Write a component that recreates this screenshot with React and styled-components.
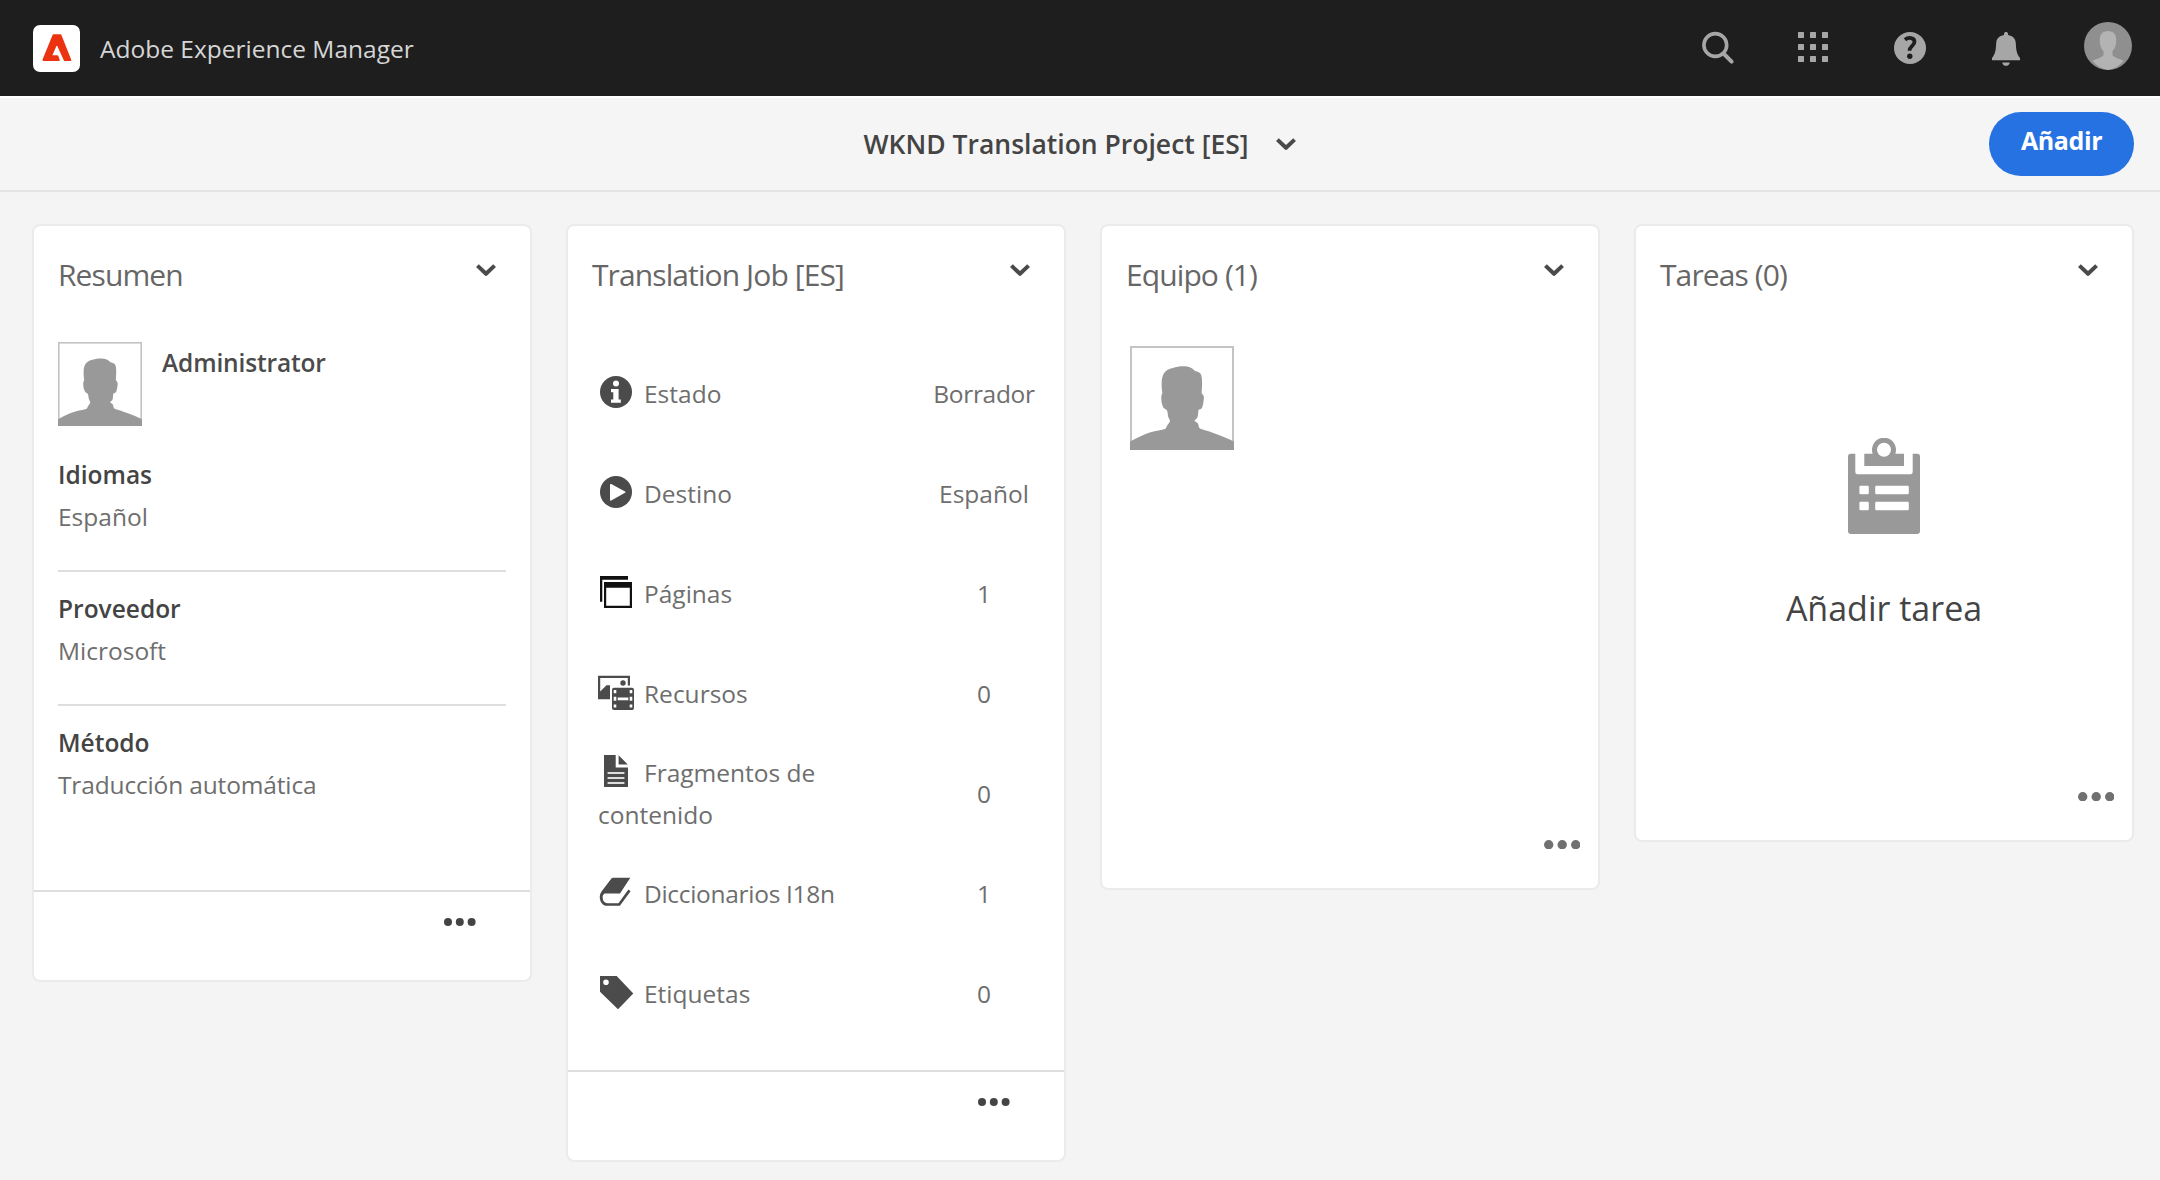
import React from "react";
import styled, { createGlobalStyle, css } from "styled-components";

const GlobalStyle = createGlobalStyle`
  *, *::before, *::after { box-sizing: border-box; }
  body { margin: 0; background: #f4f4f4; }
`;

const Page = styled.div`
  min-height: 1180px;
  background: #f4f4f4;
  color: #6e6e6e;
  font-family: "Open Sans", "Noto Sans", sans-serif;
  font-size: 24.5px;
`;

const tracked = css`
  letter-spacing: ${(p) => p.$track || 0}px;
`;

/* Shell header */
const Shell = styled.header`
  display: flex;
  align-items: center;
  height: 96px;
  padding: 0 28px 0 33px;
  background: #1e1e1e;
`;
const Logo = styled.svg`
  display: block;
  width: 47px;
  height: 47px;
`;
const Product = styled.span`
  margin-left: 20px;
  color: #d6d6d6;
  white-space: nowrap;
`;
const ShellActions = styled.nav`
  display: flex;
  align-items: center;
  margin-left: auto;
`;
const ShellButton = styled.button`
  display: grid;
  place-items: center;
  width: 96px;
  height: 96px;
  padding: 0;
  border: 0;
  background: none;
  color: #a6a6a6;
`;
const Icon = styled.svg`
  display: block;
  width: 36px;
  height: 36px;
`;
const UserPhoto = styled.svg`
  display: block;
  width: 48px;
  height: 48px;
  margin: 0 0 4px 30px;
`;

/* Title bar */
const TitleBar = styled.div`
  display: grid;
  grid-template-columns: 1fr auto 1fr;
  align-items: center;
  height: 96px;
  padding: 0 26px;
  border-top: 2px solid #fff;
  border-bottom: 2px solid #e4e4e4;
  background: #f5f5f5;
`;
const Project = styled.div`
  grid-column: 2;
  display: flex;
  align-items: center;
  gap: 28px;
`;
const ProjectName = styled.h1`
  margin: 0;
  color: #444;
  font-size: 26.5px;
  font-weight: 600;
  line-height: 36px;
  white-space: nowrap;
`;
const AddButton = styled.button`
  justify-self: end;
  width: 145px;
  height: 64px;
  padding: 0 0 8px;
  border: 0;
  border-radius: 32px;
  background: #2672e2;
  color: #fff;
  font: 700 25px/36px "Open Sans", "Noto Sans", sans-serif;
  letter-spacing: -0.4px;
`;
const Chevron = styled.svg`
  display: block;
  flex: none;
  width: 20px;
  height: 13px;
`;

/* Cards */
const Board = styled.main`
  display: flex;
  align-items: flex-start;
  gap: 34px;
  padding: 32px;
`;
const Card = styled.section`
  display: flex;
  flex-direction: column;
  flex: none;
  width: 500px;
  height: ${(p) => p.$height}px;
  border: 2px solid #ebebeb;
  border-radius: 8px;
  background: #fff;
`;
const CardHeader = styled.header`
  display: flex;
  align-items: flex-start;
  justify-content: space-between;
  padding: 29px 34px 0 24px;
`;
const CardTitle = styled.h2`
  margin: 0;
  color: #666;
  font-size: 30px;
  font-weight: 400;
  letter-spacing: -0.9px;
  line-height: 40px;
  white-space: nowrap;
`;
const CardChevron = styled(Chevron)`
  margin-top: 9px;
`;
const CardFooter = styled.footer`
  display: flex;
  justify-content: flex-end;
  align-items: flex-start;
  height: 90px;
  margin-top: auto;
  padding: 26px 54px 0 0;
  border-top: 2px solid #dedede;
`;
const CardActions = styled.div`
  display: flex;
  justify-content: flex-end;
  margin-top: auto;
  padding: 0 18px 39px 0;
`;
const Dots = styled.svg`
  display: block;
`;
const Photo = styled.svg`
  display: block;
  flex: none;
  width: ${(p) => p.$size}px;
  height: ${(p) => p.$size}px;
`;

/* Summary */
const Summary = styled.div`
  padding: 47px 24px 0;
`;
const Owner = styled.div`
  display: flex;
  align-items: flex-start;
  gap: 20px;
  margin-bottom: 12px;
`;
const OwnerName = styled.strong`
  padding-top: 6px;
  color: #4b4b4b;
  font-weight: 600;
  letter-spacing: -0.15px;
  line-height: 30px;
`;
const Field = styled.dl`
  margin: 0;
  padding: 16px 0 32px;
  line-height: 42px;
  & + & {
    border-top: 2px solid #dedede;
  }
`;
const FieldName = styled.dt`
  color: #444;
  font-weight: 600;
`;
const FieldValue = styled.dd`
  margin: 0;
  ${tracked}
`;

/* Job details */
const Details = styled.ul`
  margin: 49px 0 0;
  padding: 0;
  list-style: none;
`;
const DetailRow = styled.li`
  display: flex;
  align-items: center;
  height: 100px;
  padding-left: 30px;
  line-height: 42px;
`;
const DetailLabel = styled.span`
  width: 260px;
  ${tracked}
`;
const DetailIcon = styled.svg`
  width: 36px;
  height: 36px;
  margin-right: 10px;
  vertical-align: -7px;
`;
const DetailValue = styled.span`
  width: 160px;
  margin-left: auto;
  text-align: center;
  ${tracked}
`;

/* Team and tasks */
const Team = styled.div`
  padding: 51px 0 0 28px;
`;
const EmptyTasks = styled.div`
  display: flex;
  flex-direction: column;
  align-items: center;
  gap: 49px;
  padding-top: 143px;
`;
const TaskIcon = styled.svg`
  display: block;
  width: 72px;
  height: 96px;
`;
const AddTask = styled.span`
  color: #444;
  font-size: 34px;
  line-height: 50px;
`;

function ChevronDown({ as: Component = Chevron }) {
  return (
    <Component viewBox="0 0 20 13" fill="none" stroke="#4a4a4a" strokeWidth="4" strokeLinejoin="round">
      <path d="M1.4 1.6 10 9.8l8.6-8.2" />
    </Component>
  );
}

function MoreDots({ r = 4, gap = 11.8, color = "#444" }) {
  const w = gap * 2 + r * 2;
  return (
    <Dots width={w} height={r * 2} fill={color}>
      {[0, 1, 2].map((i) => (
        <circle key={i} cx={r + i * gap} cy={r} r={r} />
      ))}
    </Dots>
  );
}

function PersonPhoto({ size }) {
  return (
    <Photo $size={size} viewBox="0 0 104 104">
      <rect x="1" y="1" width="102" height="102" fill="#fff" stroke="#c4c4c4" strokeWidth="2" />
      <path
        fill="#999"
        d="M53.4 20.3C59 20.3 62.5 22 65 25c3 .6 5 1.5 6 3.5 1.5 4 1.2 11 .6 18.8 2.4 1.7 2.6 4.2 2.1 6.7-.4 3-.7 5.700-1.700 7.700-.8 1.500-2.500 1.500-3.500 2.300-.5 2.500-.2 5-1 7.300-.8 1.700-2.200 2.500-3.100 3.400.9 1.200 2.500 1.600 3.400 2.600 1 1.700.5 3.500 1.800 5 3.400 1.700 10.400 3.200 17.900 6.200 6 2.300 11.500 4.500 16.500 7V104H0v-8.500c5-2.700 10-5 15-7.200 6-2.600 13-3.600 20-5.300 1.500-1 1.500-2.700 2.500-4 1-1.300 2.200-2.700 2.500-4.300-.3-1.500-1.500-2.500-1.800-4-.6-2.300-.3-4.700-1.400-6.700-1-.9-3-1.300-3.800-3.300-1.300-2.700-1.700-5.700-1.700-8.400 0-2 .2-3.700 1.100-5-.6-4-.9-8-.7-11.600.2-3.200.8-6 2.300-8.400 2-3 5-4.500 8.700-5.300 3.500-1.200 7-1.700 10.700-1.700Z"
      />
    </Photo>
  );
}

const detailIcons = {
  status: (
    <g>
      <circle cx="18" cy="18" r="16" fill="#4b4b4b" />
      <circle cx="18" cy="9.6" r="3" fill="#fff" />
      <path fill="#fff" d="M13 15h7.600v10.600h2.200v3.200H13v-3.200h2.300v-7.400H13Z" />
    </g>
  ),
  target: (
    <g>
      <circle cx="18" cy="18" r="16" fill="#4b4b4b" />
      <path fill="#fff" d="M12 10.800c0-.8.6-1.100 1.300-.8l13.700 7.400c.8.4.8 1 0 1.400l-13.700 7.700c-.7.4-1.300 0-1.300-.8Z" />
    </g>
  ),
  pages: (
    <g fill="#111">
      <path d="M2 2h28v3.800H4.300v22H2Z" />
      <path fillRule="evenodd" d="M6 8h28v26H6ZM8.200 13.800v18h23.600v-18Z" />
    </g>
  ),
  assets: (
    <g fill="#4b4b4b">
      <path d="M0 1.700h32v9.800h-2.200V3.900H2.200v13.500l6.300-6.200H12v14H0Z" />
      <circle cx="25" cy="9" r="2.7" />
      <rect x="14" y="13.700" width="22" height="22.300" rx="2" />
      <path
        fill="#fff"
        d="M15.700 16h2.600v3.200h-2.600zM15.700 22.800h2.600v4h-2.600zM15.700 30.400h2.600v3.200h-2.600zM31.700 16h2.600v3.200h-2.600zM31.700 22.800h2.600v4h-2.600zM31.700 30.400h2.600v3.200h-2.600zM19.700 23.600h10.600v2.600H19.700z"
      />
    </g>
  ),
  fragments: (
    <g>
      <path fill="#4b4b4b" d="M6 2h11.700v12.600H30V34H6ZM20.600 2.300l9.100 9.100h-9.100Z" />
      <path stroke="#ddd" strokeWidth="2" d="M9.600 20h16.800M9.600 25h16.800M9.600 30h16.800" />
    </g>
  ),
  dictionaries: (
    <g>
      <path fill="#4b4b4b" d="M14.700 3.700h17.600L22 19.400H6.500l-4 4C2 20.500 3 19 4 17.700Z" />
      <path
        fill="none"
        stroke="#4b4b4b"
        strokeWidth="2.7"
        d="M14.900 4.900 4.600 18.400C1.500 23 3.400 30.500 9.800 30.500h11.400l10.300-14.100"
      />
    </g>
  ),
  tags: (
    <path
      fill="#4b4b4b"
      fillRule="evenodd"
      d="M2 2h16.700L35.300 19.400 20 35.300 2 17.700ZM8 5.500a2.800 2.800 0 1 0 0 5.600 2.800 2.800 0 0 0 0-5.600Z"
    />
  ),
};

const fields = [
  { name: "Idiomas", value: "Español" },
  { name: "Proveedor", value: "Microsoft" },
  { name: "Método", value: "Traducción automática", track: -0.15 },
];

const details = [
  { icon: "status", label: "Estado", value: "Borrador", valueTrack: -0.3 },
  { icon: "target", label: "Destino", value: "Español" },
  { icon: "pages", label: "Páginas", value: "1" },
  { icon: "assets", label: "Recursos", value: "0" },
  { icon: "fragments", label: "Fragmentos de contenido", value: "0" },
  { icon: "dictionaries", label: "Diccionarios I18n", value: "1", track: -0.3 },
  { icon: "tags", label: "Etiquetas", value: "0" },
];

function Header() {
  return (
    <Shell>
      <Logo viewBox="0 0 47 47">
        <rect width="47" height="47" rx="7" fill="#fff" />
        <path
          fill="#eb3312"
          stroke="#eb3312"
          strokeWidth="2"
          strokeLinejoin="round"
          d="M20.600 10.200h6.800L37.300 35h-5.500L23.800 17.500 18 31.200h6.300l1.500 3.800H10.500Z"
        />
      </Logo>
      <Product>Adobe Experience Manager</Product>
      <ShellActions>
        <ShellButton aria-label="Buscar">
          <Icon viewBox="0 0 36 36" fill="none" stroke="currentColor">
            <circle cx="15.3" cy="15" r="11.4" strokeWidth="3.6" />
            <path strokeWidth="4" strokeLinecap="round" d="m24 24 7.600 7.600" />
          </Icon>
        </ShellButton>
        <ShellButton aria-label="Soluciones">
          <Icon viewBox="0 0 36 36" fill="currentColor">
            {[5, 17, 29].map((y) =>
              [5, 17, 29].map((x) => (
                <rect key={`${x}-${y}`} x={x - 3} y={y - 3} width="6" height="6" rx=".5" />
              ))
            )}
          </Icon>
        </ShellButton>
        <ShellButton aria-label="Ayuda">
          <Icon viewBox="0 0 36 36">
            <circle cx="18" cy="18" r="16" fill="currentColor" />
            <path fill="none" stroke="#1e1e1e" strokeWidth="3.8" d="M13 9.800c3.500-3 9.500-2.300 9.500 2 0 4-5 4.200-5 9" />
            <circle cx="17.8" cy="26.2" r="2.7" fill="#1e1e1e" />
          </Icon>
        </ShellButton>
        <ShellButton aria-label="Notificaciones">
          <Icon viewBox="0 0 36 36" fill="currentColor">
            <path d="M16 3.800c0-2.400 4-2.400 4 0V5c5 .8 7.400 3.600 7.800 8 .4 6 .4 10.500 4.200 15v2.200H4V28c3.800-4.500 3.800-9 4.200-15 .4-4.400 2.800-7.200 7.800-8Z" />
            <path d="M14.200 32.400h7.600c-.6 4.600-7 4.600-7.600 0Z" />
          </Icon>
        </ShellButton>
        <UserPhoto viewBox="0 0 48 48">
          <circle cx="24" cy="24" r="24" fill="#8f8f8f" />
          <path
            fill="#b3b3b3"
            d="M24 9c5.500 0 8.200 3.500 8.200 8.500 0 5-.7 9-3.700 11.500v4c1.500 3 7 3.500 11 5.800A24 24 0 0 1 24 48 24 24 0 0 1 8.500 38.800c4-2.300 9.500-2.800 11-5.800v-4c-3-2.500-3.700-6.500-3.700-11.500C15.800 12.500 18.500 9 24 9Z"
          />
        </UserPhoto>
      </ShellActions>
    </Shell>
  );
}

function CardHead({ title }) {
  return (
    <CardHeader>
      <CardTitle>{title}</CardTitle>
      <ChevronDown as={CardChevron} />
    </CardHeader>
  );
}

export default function App() {
  return (
    <Page>
      <GlobalStyle />
      <Header />
      <TitleBar>
        <Project>
          <ProjectName>WKND Translation Project [ES]</ProjectName>
          <ChevronDown />
        </Project>
        <AddButton>Añadir</AddButton>
      </TitleBar>
      <Board>
        <Card $height={758}>
          <CardHead title="Resumen" />
          <Summary>
            <Owner>
              <PersonPhoto size={84} />
              <OwnerName>Administrator</OwnerName>
            </Owner>
            {fields.map((f) => (
              <Field key={f.name}>
                <FieldName>{f.name}</FieldName>
                <FieldValue $track={f.track}>{f.value}</FieldValue>
              </Field>
            ))}
          </Summary>
          <CardFooter>
            <MoreDots />
          </CardFooter>
        </Card>

        <Card $height={938}>
          <CardHead title="Translation Job [ES]" />
          <Details>
            {details.map((d) => (
              <DetailRow key={d.label}>
                <DetailLabel $track={d.track}>
                  <DetailIcon viewBox="0 0 36 36">{detailIcons[d.icon]}</DetailIcon>
                  {d.label}
                </DetailLabel>
                <DetailValue $track={d.valueTrack}>{d.value}</DetailValue>
              </DetailRow>
            ))}
          </Details>
          <CardFooter>
            <MoreDots />
          </CardFooter>
        </Card>

        <Card $height={666}>
          <CardHead title="Equipo (1)" />
          <Team>
            <PersonPhoto size={104} />
          </Team>
          <CardActions>
            <MoreDots r={4.7} gap={13.5} color="#707070" />
          </CardActions>
        </Card>

        <Card $height={618}>
          <CardHead title="Tareas (0)" />
          <EmptyTasks>
            <TaskIcon viewBox="0 0 72 96" fill="#999">
              <path d="M3 15.700h4.300V34a2.300 2.300 0 0 0 2.300 2.300h52.800a2.300 2.300 0 0 0 2.300-2.300V15.700H69a3 3 0 0 1 3 3V93a3 3 0 0 1-3 3H3a3 3 0 0 1-3-3V18.700a3 3 0 0 1 3-3Z" />
              <path
                fillRule="evenodd"
                d="M16.300 15.700h8.400a12 12 0 1 1 22.600 0h8.700V28H16.300ZM36 4.800a7 7 0 1 0 0 14 7 7 0 0 0 0-14Z"
              />
              <g fill="#fff">
                <rect x="11.4" y="47.700" width="9.4" height="8.6" rx="1.2" />
                <rect x="27.2" y="47.700" width="33.6" height="8.6" rx="1.2" />
                <rect x="11.4" y="63.700" width="9.4" height="8.6" rx="1.2" />
                <rect x="27.2" y="63.700" width="33.6" height="8.6" rx="1.2" />
              </g>
            </TaskIcon>
            <AddTask>Añadir tarea</AddTask>
          </EmptyTasks>
          <CardActions>
            <MoreDots r={4.7} gap={13.5} color="#707070" />
          </CardActions>
        </Card>
      </Board>
    </Page>
  );
}
